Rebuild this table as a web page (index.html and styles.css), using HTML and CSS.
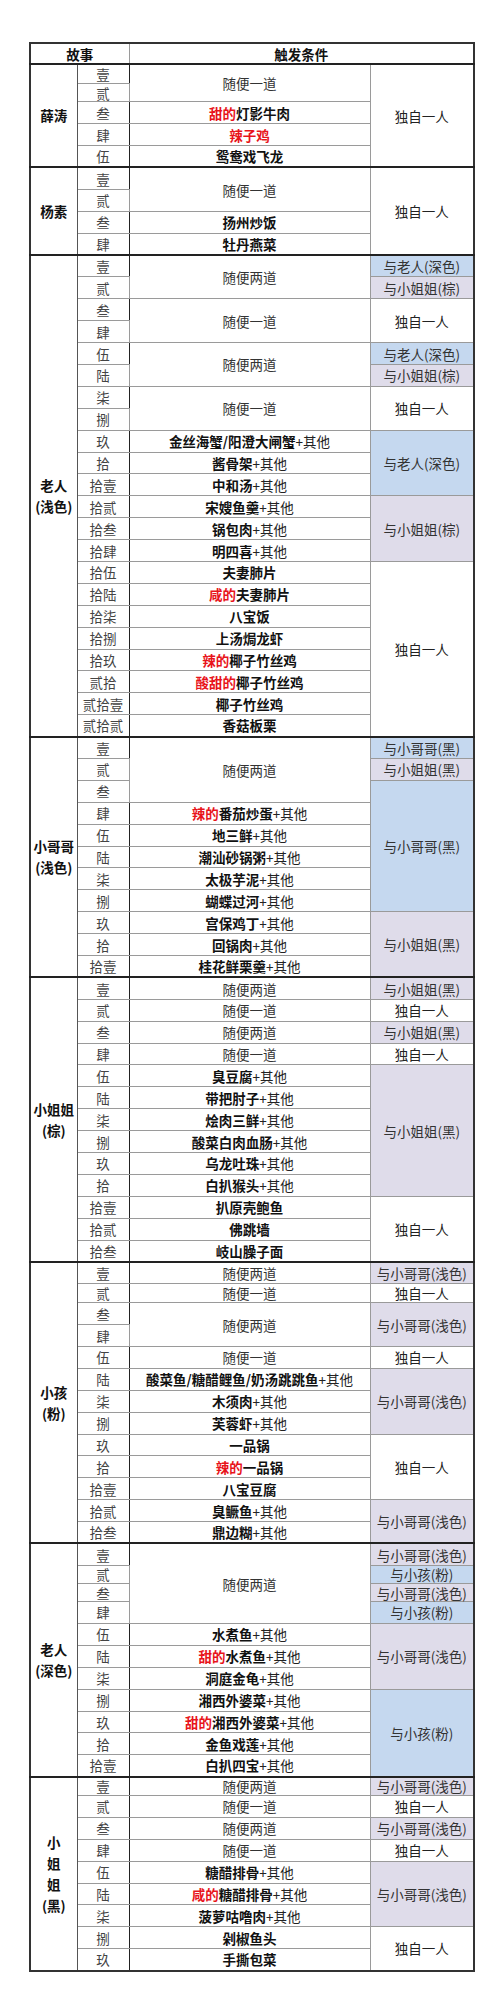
FILE: index.html
```html
<!DOCTYPE html>
<html lang="zh-CN">
<head>
<meta charset="utf-8">
<title>故事触发条件</title>
<link rel="stylesheet" href="styles.css">
</head>
<body>
<table class="sheet">
<colgroup><col class="c-name"><col class="c-no"><col class="c-cond"><col class="c-with"></colgroup>
<thead>
<tr class="head"><th colspan="2">故事</th><th colspan="2">触发条件</th></tr>
</thead>
<tbody class="sec">
<tr class="h20"><td class="name" rowspan="5">薛涛</td><td class="no">壹</td><td class="any" rowspan="2">随便一道</td><td class="alone" rowspan="5">独自一人</td></tr>
<tr class="h18"><td class="no">贰</td></tr>
<tr><td class="no">叁</td><td class="dish"><span class="red">甜的</span>灯影牛肉</td></tr>
<tr><td class="no">肆</td><td class="dish"><span class="red">辣子鸡</span></td></tr>
<tr><td class="no">伍</td><td class="dish">鸳鸯戏飞龙</td></tr>
</tbody>
<tbody class="sec">
<tr><td class="name" rowspan="4">杨素</td><td class="no">壹</td><td class="any" rowspan="2">随便一道</td><td class="alone" rowspan="4">独自一人</td></tr>
<tr><td class="no">贰</td></tr>
<tr><td class="no">叁</td><td class="dish">扬州炒饭</td></tr>
<tr><td class="no">肆</td><td class="dish">牡丹燕菜</td></tr>
</tbody>
<tbody class="sec">
<tr><td class="name" rowspan="22">老人<br>(浅色)</td><td class="no">壹</td><td class="any" rowspan="2">随便两道</td><td class="with blue">与老人(深色)</td></tr>
<tr><td class="no">贰</td><td class="with lav">与小姐姐(棕)</td></tr>
<tr><td class="no">叁</td><td class="any" rowspan="2">随便一道</td><td class="alone" rowspan="2">独自一人</td></tr>
<tr><td class="no">肆</td></tr>
<tr><td class="no">伍</td><td class="any" rowspan="2">随便两道</td><td class="with blue">与老人(深色)</td></tr>
<tr><td class="no">陆</td><td class="with lav">与小姐姐(棕)</td></tr>
<tr><td class="no">柒</td><td class="any" rowspan="2">随便一道</td><td class="alone" rowspan="2">独自一人</td></tr>
<tr><td class="no">捌</td></tr>
<tr><td class="no">玖</td><td class="dish">金丝海蟹/阳澄大闸蟹<span class="more">+其他</span></td><td class="with blue" rowspan="3">与老人(深色)</td></tr>
<tr><td class="no">拾</td><td class="dish">酱骨架<span class="more">+其他</span></td></tr>
<tr><td class="no">拾壹</td><td class="dish">中和汤<span class="more">+其他</span></td></tr>
<tr><td class="no">拾贰</td><td class="dish">宋嫂鱼羹<span class="more">+其他</span></td><td class="with lav" rowspan="3">与小姐姐(棕)</td></tr>
<tr><td class="no">拾叁</td><td class="dish">锅包肉<span class="more">+其他</span></td></tr>
<tr><td class="no">拾肆</td><td class="dish">明四喜<span class="more">+其他</span></td></tr>
<tr><td class="no">拾伍</td><td class="dish">夫妻肺片</td><td class="alone" rowspan="8">独自一人</td></tr>
<tr><td class="no">拾陆</td><td class="dish"><span class="red">咸的</span>夫妻肺片</td></tr>
<tr><td class="no">拾柒</td><td class="dish">八宝饭</td></tr>
<tr><td class="no">拾捌</td><td class="dish">上汤焗龙虾</td></tr>
<tr><td class="no">拾玖</td><td class="dish"><span class="red">辣的</span>椰子竹丝鸡</td></tr>
<tr><td class="no">贰拾</td><td class="dish"><span class="red">酸甜的</span>椰子竹丝鸡</td></tr>
<tr><td class="no">贰拾壹</td><td class="dish">椰子竹丝鸡</td></tr>
<tr><td class="no">贰拾贰</td><td class="dish">香菇板栗</td></tr>
</tbody>
<tbody class="sec">
<tr><td class="name" rowspan="11">小哥哥<br>(浅色)</td><td class="no">壹</td><td class="any" rowspan="3">随便两道</td><td class="with blue">与小哥哥(黑)</td></tr>
<tr><td class="no">贰</td><td class="with lav">与小姐姐(黑)</td></tr>
<tr><td class="no">叁</td><td class="with blue" rowspan="6">与小哥哥(黑)</td></tr>
<tr><td class="no">肆</td><td class="dish"><span class="red">辣的</span>番茄炒蛋<span class="more">+其他</span></td></tr>
<tr><td class="no">伍</td><td class="dish">地三鲜<span class="more">+其他</span></td></tr>
<tr><td class="no">陆</td><td class="dish">潮汕砂锅粥<span class="more">+其他</span></td></tr>
<tr><td class="no">柒</td><td class="dish">太极芋泥<span class="more">+其他</span></td></tr>
<tr><td class="no">捌</td><td class="dish">蝴蝶过河<span class="more">+其他</span></td></tr>
<tr><td class="no">玖</td><td class="dish">宫保鸡丁<span class="more">+其他</span></td><td class="with lav" rowspan="3">与小姐姐(黑)</td></tr>
<tr><td class="no">拾</td><td class="dish">回锅肉<span class="more">+其他</span></td></tr>
<tr><td class="no">拾壹</td><td class="dish">桂花鲜栗羹<span class="more">+其他</span></td></tr>
</tbody>
<tbody class="sec">
<tr><td class="name" rowspan="13">小姐姐<br>(棕)</td><td class="no">壹</td><td class="any">随便两道</td><td class="with lav">与小姐姐(黑)</td></tr>
<tr><td class="no">贰</td><td class="any">随便一道</td><td class="alone">独自一人</td></tr>
<tr><td class="no">叁</td><td class="any">随便两道</td><td class="with lav">与小姐姐(黑)</td></tr>
<tr><td class="no">肆</td><td class="any">随便一道</td><td class="alone">独自一人</td></tr>
<tr><td class="no">伍</td><td class="dish">臭豆腐<span class="more">+其他</span></td><td class="with lav" rowspan="6">与小姐姐(黑)</td></tr>
<tr><td class="no">陆</td><td class="dish">带把肘子<span class="more">+其他</span></td></tr>
<tr><td class="no">柒</td><td class="dish">烩肉三鲜<span class="more">+其他</span></td></tr>
<tr><td class="no">捌</td><td class="dish">酸菜白肉血肠<span class="more">+其他</span></td></tr>
<tr><td class="no">玖</td><td class="dish">乌龙吐珠<span class="more">+其他</span></td></tr>
<tr><td class="no">拾</td><td class="dish">白扒猴头<span class="more">+其他</span></td></tr>
<tr><td class="no">拾壹</td><td class="dish">扒原壳鲍鱼</td><td class="alone" rowspan="3">独自一人</td></tr>
<tr><td class="no">拾贰</td><td class="dish">佛跳墙</td></tr>
<tr><td class="no">拾叁</td><td class="dish">岐山臊子面</td></tr>
</tbody>
<tbody class="sec">
<tr><td class="name" rowspan="13">小孩<br>(粉)</td><td class="no">壹</td><td class="any">随便两道</td><td class="with lav">与小哥哥(浅色)</td></tr>
<tr class="h19"><td class="no">贰</td><td class="any">随便一道</td><td class="alone">独自一人</td></tr>
<tr><td class="no">叁</td><td class="any" rowspan="2">随便两道</td><td class="with lav" rowspan="2">与小哥哥(浅色)</td></tr>
<tr><td class="no">肆</td></tr>
<tr><td class="no">伍</td><td class="any">随便一道</td><td class="alone">独自一人</td></tr>
<tr><td class="no">陆</td><td class="dish">酸菜鱼/糖醋鲤鱼/奶汤跳跳鱼<span class="more">+其他</span></td><td class="with lav" rowspan="3">与小哥哥(浅色)</td></tr>
<tr><td class="no">柒</td><td class="dish">木须肉<span class="more">+其他</span></td></tr>
<tr><td class="no">捌</td><td class="dish">芙蓉虾<span class="more">+其他</span></td></tr>
<tr><td class="no">玖</td><td class="dish">一品锅</td><td class="alone" rowspan="3">独自一人</td></tr>
<tr><td class="no">拾</td><td class="dish"><span class="red">辣的</span>一品锅</td></tr>
<tr><td class="no">拾壹</td><td class="dish">八宝豆腐</td></tr>
<tr><td class="no">拾贰</td><td class="dish">臭鳜鱼<span class="more">+其他</span></td><td class="with lav" rowspan="2">与小哥哥(浅色)</td></tr>
<tr><td class="no">拾叁</td><td class="dish">鼎边糊<span class="more">+其他</span></td></tr>
</tbody>
<tbody class="sec">
<tr><td class="name" rowspan="11">老人<br>(深色)</td><td class="no">壹</td><td class="any" rowspan="4">随便两道</td><td class="with lav">与小哥哥(浅色)</td></tr>
<tr class="h18"><td class="no">贰</td><td class="with blue">与小孩(粉)</td></tr>
<tr class="h18"><td class="no">叁</td><td class="with lav">与小哥哥(浅色)</td></tr>
<tr><td class="no">肆</td><td class="with blue">与小孩(粉)</td></tr>
<tr><td class="no">伍</td><td class="dish">水煮鱼<span class="more">+其他</span></td><td class="with lav" rowspan="3">与小哥哥(浅色)</td></tr>
<tr><td class="no">陆</td><td class="dish"><span class="red">甜的</span>水煮鱼<span class="more">+其他</span></td></tr>
<tr><td class="no">柒</td><td class="dish">洞庭金龟<span class="more">+其他</span></td></tr>
<tr><td class="no">捌</td><td class="dish">湘西外婆菜<span class="more">+其他</span></td><td class="with blue" rowspan="4">与小孩(粉)</td></tr>
<tr><td class="no">玖</td><td class="dish"><span class="red">甜的</span>湘西外婆菜<span class="more">+其他</span></td></tr>
<tr><td class="no">拾</td><td class="dish">金鱼戏莲<span class="more">+其他</span></td></tr>
<tr><td class="no">拾壹</td><td class="dish">白扒四宝<span class="more">+其他</span></td></tr>
</tbody>
<tbody class="sec">
<tr class="h19"><td class="name" rowspan="9">小<br>姐<br>姐<br>(黑)</td><td class="no">壹</td><td class="any">随便两道</td><td class="with lav">与小哥哥(浅色)</td></tr>
<tr><td class="no">贰</td><td class="any">随便一道</td><td class="alone">独自一人</td></tr>
<tr><td class="no">叁</td><td class="any">随便两道</td><td class="with lav">与小哥哥(浅色)</td></tr>
<tr><td class="no">肆</td><td class="any">随便一道</td><td class="alone">独自一人</td></tr>
<tr><td class="no">伍</td><td class="dish">糖醋排骨<span class="more">+其他</span></td><td class="with lav" rowspan="3">与小哥哥(浅色)</td></tr>
<tr><td class="no">陆</td><td class="dish"><span class="red">咸的</span>糖醋排骨<span class="more">+其他</span></td></tr>
<tr><td class="no">柒</td><td class="dish">菠萝咕噜肉<span class="more">+其他</span></td></tr>
<tr><td class="no">捌</td><td class="dish">剁椒鱼头</td><td class="alone" rowspan="2">独自一人</td></tr>
<tr><td class="no">玖</td><td class="dish">手撕包菜</td></tr>
</tbody>
</table>
</body>
</html>
```

FILE: styles.css
```css
html, body {
  margin: 0;
  padding: 0;
  background: #ffffff;
}

body {
  padding: 42px 0 0 29px;
  font-family: "Noto Sans CJK SC", "Noto Sans", sans-serif;
  font-size: 13.5px;
  color: #222;
}

.sheet {
  border-collapse: collapse;
  table-layout: fixed;
  width: 444px;
  border: 2px solid #333;
}

.c-name { width: 47px; }
.c-no { width: 52px; }
.c-cond { width: 241px; }
.c-with { width: 104px; }

.sheet th,
.sheet td {
  padding: 0;
  text-align: center;
  vertical-align: middle;
  line-height: 16px;
  border: 1px solid #9a9a9a;
  white-space: nowrap;
}

.sheet tr { height: 21.9px; }
.sheet tr.head { height: 21px; }
.sheet tr.h20 { height: 19.7px; }
.sheet tr.h19 { height: 18.8px; }
.sheet tr.h18 { height: 18.1px; }

.sheet th {
  font-weight: 700;
  color: #111;
  border-bottom: 2px solid #222;
  border-left: 1px solid #222;
}

.sec { border-top: 2px solid #222; }

.name {
  font-weight: 700;
  color: #111;
  border-right: 1px solid #555 !important;
  line-height: 21px !important;
}

.no {
  color: #444;
  border-right: 1px solid #222 !important;
}

.any { color: #333; }

.dish {
  font-weight: 700;
  color: #111;
}

.more { font-weight: 400; color: #222; }

.red { color: #e8141b; font-weight: 700; }

.alone { color: #222; }

.with { color: #333; }

.blue { background: #c5d8ef; }
.lav { background: #dfdcea; }
```
